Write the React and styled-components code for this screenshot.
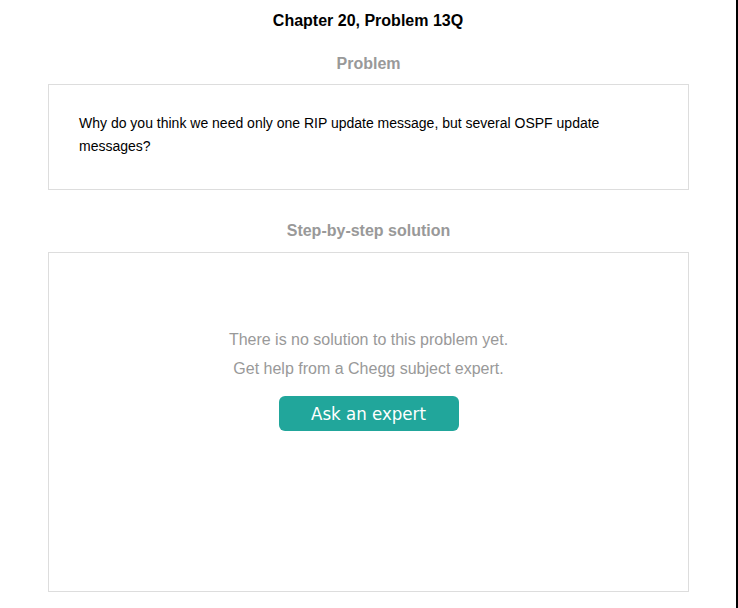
import { createGlobalStyle, styled } from 'styled-components'

const GlobalStyle = createGlobalStyle`
  body {
    margin: 0;
    background: #fff;
    font-family: "Liberation Sans", Arial, sans-serif;
  }
`

const Page = styled.div`
  box-sizing: border-box;
  width: 738px;
  min-height: 608px;
  border-right: 2px solid #000;
  padding-top: 12px;
`

const Column = styled.div`
  width: 641px;
  margin-left: 48px;
  display: flex;
  flex-direction: column;
`

const Title = styled.h1`
  margin: 0;
  font-size: 16px;
  line-height: 18px;
  font-weight: bold;
  color: #000;
  text-align: center;
`

const SectionHeading = styled.h2`
  margin: ${({ $top }) => $top}px 0 ${({ $bottom }) => $bottom}px;
  font-size: 16px;
  line-height: 18px;
  font-weight: bold;
  color: #999;
  text-align: center;
`

const Card = styled.div`
  box-sizing: border-box;
  border: 1px solid #ddd;
  height: ${({ $height }) => $height}px;
`

const ProblemText = styled.p`
  margin: 0;
  padding: 27px 30px 0;
  font-size: 14px;
  line-height: 23px;
  color: #000;
`

const EmptyState = styled.div`
  display: flex;
  flex-direction: column;
  align-items: center;
  padding-top: 72px;
`

const Muted = styled.p`
  margin: 0;
  font-size: 16px;
  line-height: 29px;
  color: #999;
`

const ExpertButton = styled.button`
  margin-top: 13px;
  width: 180px;
  height: 35px;
  border: none;
  border-radius: 6px;
  background: #21a69b;
  color: #fff;
  font-family: "DejaVu Sans Condensed", "DejaVu Sans", Tahoma, sans-serif;
  font-size: 18.5px;
  cursor: pointer;
`

export default function App() {
  return (
    <>
      <GlobalStyle />
      <Page>
        <Title>Chapter 20, Problem 13Q</Title>
        <Column>
          <SectionHeading $top={25} $bottom={11}>Problem</SectionHeading>
          <Card $height={106}>
            <ProblemText>
              Why do you think we need only one RIP update message, but several OSPF update
              messages?
            </ProblemText>
          </Card>
          <SectionHeading $top={32} $bottom={12}>Step-by-step solution</SectionHeading>
          <Card $height={340}>
            <EmptyState>
              <Muted>There is no solution to this problem yet.</Muted>
              <Muted>Get help from a Chegg subject expert.</Muted>
              <ExpertButton>Ask an expert</ExpertButton>
            </EmptyState>
          </Card>
        </Column>
      </Page>
    </>
  )
}
